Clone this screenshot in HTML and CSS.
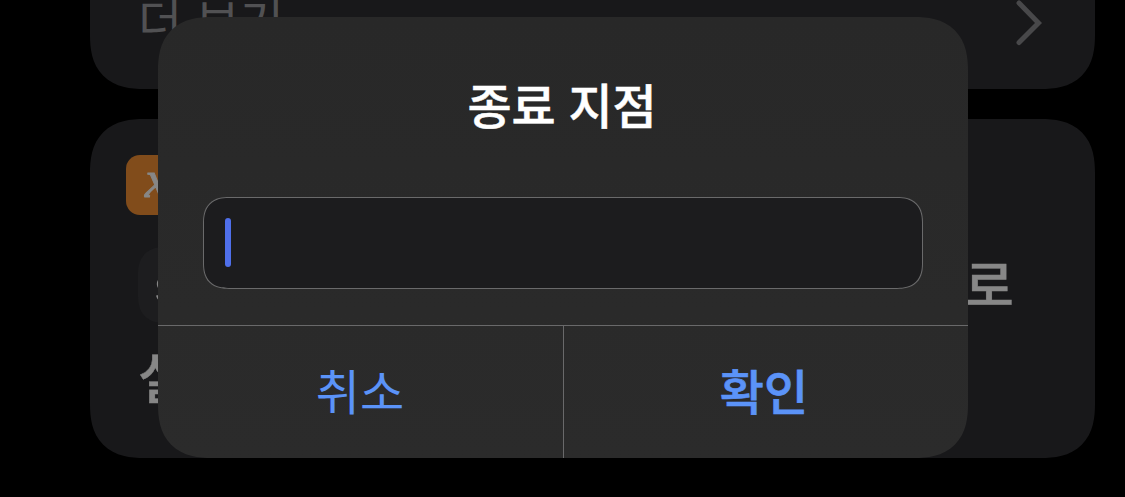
FILE: index.html
```
<!DOCTYPE html>
<html lang="ko">
<head>
  <meta charset="UTF-8" />
  <title>종료 지점</title>
  <link rel="stylesheet" href="styles.css">
</head>
<body>
  <main class="actions">
    <section class="card card-more">
      <span class="more-label">더 보기</span>
      <svg class="chevron" viewBox="0 0 26 46" aria-hidden="true">
        <path d="M3 3 L22.5 23 L3 42.5" />
      </svg>
    </section>

    <section class="card card-variable">
      <div class="app-icon">x</div>
      <div class="row">
        <span class="pill">s</span>
        <span class="particle">로</span>
      </div>
      <div class="verb">설</div>
    </section>
  </main>

  <form class="dialog" role="dialog" aria-labelledby="title" autocomplete="off">
    <h1 id="title">종료 지점</h1>
    <div class="field"><span class="caret"></span></div>
    <div class="buttons">
      <button type="button">취소</button>
      <button type="button" class="confirm">확인</button>
    </div>
  </form>
</body>
</html>
```
FILE: styles.css
```
* {
  box-sizing: border-box;
}

body {
  background: #000;
  font-family: "Noto Sans CJK KR", sans-serif;
  height: 497px;
  margin: 0;
  overflow: hidden;
  position: relative;
}

.actions {
  display: flex;
  flex-direction: column;
  gap: 30px;
  padding: 0 30px 0 90px;
}

.card {
  background: #18181a;
  border-radius: 54px;
  corner-shape: superellipse(1.3);
}

.card-more {
  border-radius: 0 0 54px 54px;
  display: flex;
  justify-content: space-between;
  height: 89px;
  padding: 0 53px 0 48px;
}

.more-label {
  color: #515153;
  font-size: 48px;
  line-height: 70px;
  margin-top: -17px;
}

.chevron {
  width: 26px;
  height: 46px;
  fill: none;
  stroke: #48484a;
  stroke-width: 5;
  stroke-linecap: round;
  stroke-linejoin: miter;
}

.card-variable {
  height: 339px;
  padding: 36px 81px 0 36px;
}

.app-icon {
  background: #814c1b;
  border-radius: 14px;
  color: #878787;
  font: italic 52px/50px "Liberation Serif", serif;
  height: 60px;
  padding-left: 19px;
  width: 60px;
  -webkit-text-stroke: 1px #878787;
}

.row {
  display: flex;
  justify-content: space-between;
  height: 76px;
  margin: 32px 0 0 12px;
}

.pill {
  background: #1d1d1f;
  border-radius: 28px;
  color: #878787;
  corner-shape: superellipse(1.3);
  font: 600 49px/77px Inter, sans-serif;
  padding: 0 16px;
}

.particle {
  color: #878787;
  font-size: 54px;
  font-weight: 500;
  line-height: 71px;
  -webkit-text-stroke: 0.4px #878787;
}

.verb {
  color: #878787;
  font-size: 54px;
  font-weight: 500;
  line-height: 78px;
  margin: 14px 0 0 12px;
  -webkit-text-stroke: 0.4px #878787;
}

.dialog {
  background: linear-gradient(#282828, #2b2b2b);
  border-radius: 54px;
  corner-shape: superellipse(1.3);
  display: flex;
  flex-direction: column;
  height: 441px;
  left: 158px;
  overflow: hidden;
  position: absolute;
  top: 17px;
  width: 810px;
}

h1 {
  color: #fff;
  font-size: 48px;
  font-weight: 500;
  letter-spacing: -0.2px;
  line-height: 70px;
  margin: 51px 2px 59px 0;
  text-align: center;
  -webkit-text-stroke: 0.5px #fff;
}

.field {
  background: #1c1c1e;
  border: 1px solid #6a6a6b;
  border-radius: 26px;
  corner-shape: superellipse(1.3);
  height: 92px;
  margin: 0 45px 36px;
  padding: 20px 21px;
}

.caret {
  background: #4f6fea;
  border-radius: 3px;
  display: block;
  height: 49px;
  width: 6px;
}

.buttons {
  border-top: 1px solid #69696a;
  display: grid;
  flex: 1;
  grid-template-columns: 405px 1fr;
}

button {
  background: none;
  border: 0;
  color: #5b93f8;
  font: 400 48px/70px "Noto Sans CJK KR", sans-serif;
  padding: 0 1px 7px 0;
}

.confirm {
  border-left: 1px solid #69696a;
  font-weight: 500;
  padding-right: 4px;
  -webkit-text-stroke: 0.7px #5b93f8;
}
```
